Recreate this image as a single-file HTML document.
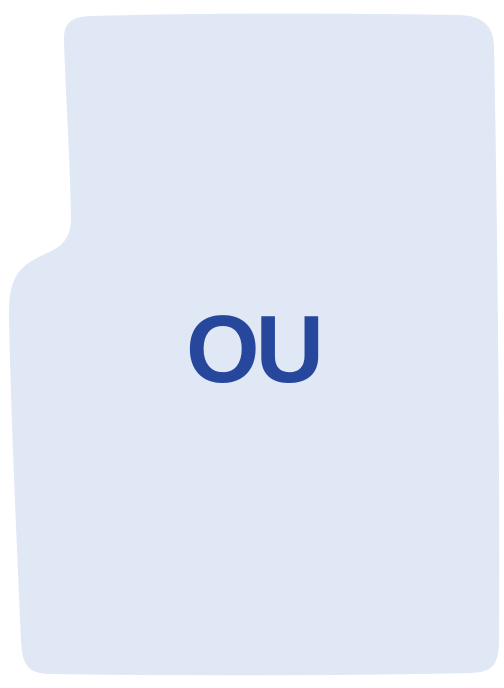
<!DOCTYPE html>
<html><head><style>
html,body{margin:0;padding:0;background:#fff;width:504px;height:688px;overflow:hidden}
svg{display:block}
</style></head><body>
<svg width="504" height="688" viewBox="0 0 504 688" xmlns="http://www.w3.org/2000/svg">
<path d="M64 42 C63 22 72 17 90 16 C200 13 350 13 460 15 C485 16 493 28 494 45 C497 200 500 450 499 640 C499 668 490 672 470 673 C330 676 180 676 48 674 C28 673 22 665 21 640 C17 550 11 420 9 320 C8 285 15 272 30 262 C48 250 70 250 71 220 C70 160 66 100 64 42 Z" fill="#e0e8f6"/>
<text x="253" y="382" text-anchor="middle" font-family="Liberation Sans, sans-serif" font-weight="bold" font-size="96" fill="#26479c" letter-spacing="-4" textLength="134" lengthAdjust="spacingAndGlyphs">OU</text>
</svg>
</body></html>
